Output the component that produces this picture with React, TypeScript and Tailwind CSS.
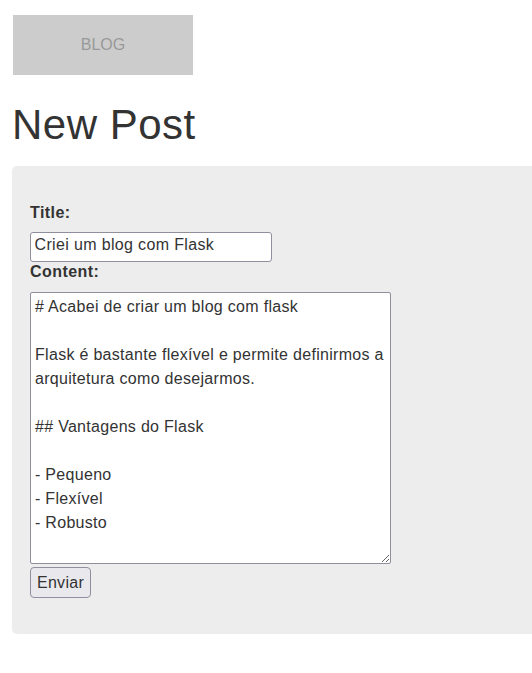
import React from "react";

const content = `# Acabei de criar um blog com flask

Flask é bastante flexível e permite definirmos a arquitetura como desejarmos.

## Vantagens do Flask

- Pequeno
- Flexível
- Robusto`;

export default function App() {
  return (
    <div className="min-h-[673px] bg-white text-[#333] font-['Liberation_Sans',Arial,sans-serif]">
      <div className="pt-[15px] pl-[13px]">
        <div className="flex h-[60px] w-[180px] items-center justify-center bg-[#cccccc] text-[16px] text-[#999999]">
          BLOG
        </div>
      </div>
      <h1 className="mt-[26px] ml-[12px] text-[42px] leading-[48px] font-normal tracking-[0.5px]">New Post</h1>
      <form
        className="mt-[17px] ml-[12px] flex flex-col items-start rounded-l-[5px] bg-[#ededed] pt-[37px] pb-[36px] pl-[18px]"
        onSubmit={(e) => e.preventDefault()}
      >
        <label className="text-[16px] leading-[20px] font-bold tracking-[0.45px]">Title:</label>
        <input
          type="text"
          defaultValue="Criei um blog com Flask"
          className="mt-[9px] box-border h-[30px] w-[242px] rounded-[3px] border border-[#8f8f9d] bg-white pl-[3.5px] pr-[3px] pt-[2px] pb-[7px] text-[16px] leading-[18px] tracking-[0.35px] text-[#333] outline-none"
        />
        <label className="text-[16px] leading-[20px] font-bold tracking-[0.45px]">Content:</label>
        <textarea
          defaultValue={content}
          className="mt-[10px] box-border h-[272px] w-[361px] rounded-[2px] border border-[#8f8f9d] bg-white pl-[4px] pr-[3px] py-[2px] text-[16px] leading-[24px] tracking-[0.3px] text-[#333] outline-none"
        />
        <button
          type="submit"
          className="mt-[3px] box-border h-[31px] w-[61px] rounded-[4px] border border-[#8f8f9d] bg-[#e9e9ed] text-[16px] leading-[18px] tracking-[0.3px] text-[#333]"
        >
          Enviar
        </button>
      </form>
    </div>
  );
}
